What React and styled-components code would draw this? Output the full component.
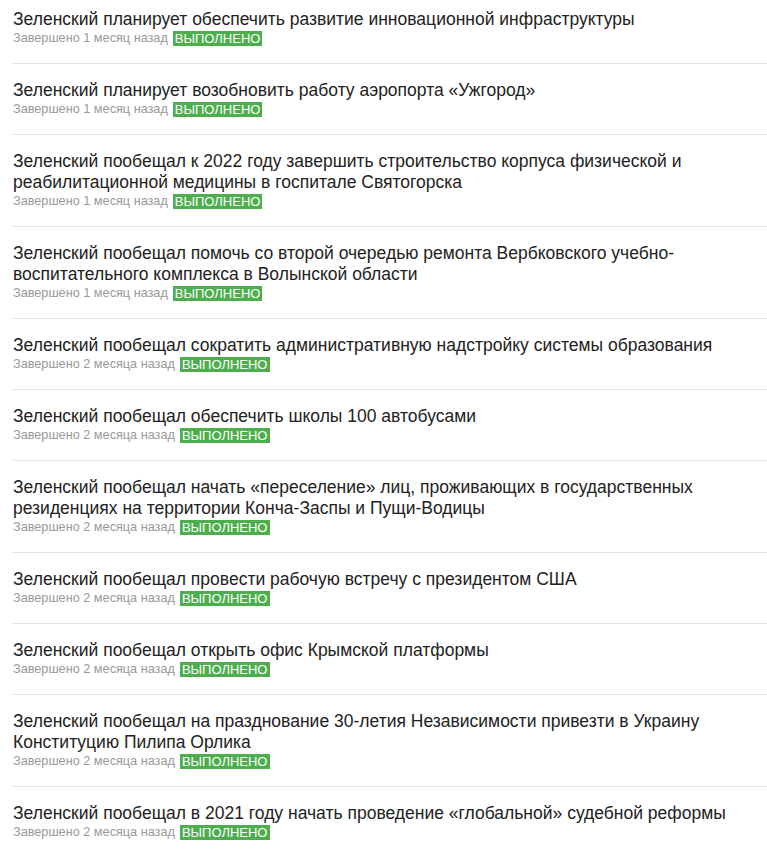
import styled, { createGlobalStyle } from "styled-components";

const GlobalStyle = createGlobalStyle`
  html, body {
    margin: 0;
    padding: 0;
    background: #fff;
  }
  body {
    font-family: "Liberation Sans", Arial, sans-serif;
  }
`;

const List = styled.ul`
  list-style: none;
  margin: 0;
  padding: 0 0 0 13px;
`;

const Item = styled.li`
  padding: 16px 0 16px;
  border-bottom: 1px solid #e3e3e3;
  &:first-child {
    padding-top: 9px;
  }
`;

const Title = styled.a`
  display: block;
  font-size: 17.5px;
  line-height: 21px;
  color: #222;
  text-decoration: none;
  padding-right: 30px;
`;

const Meta = styled.div`
  display: flex;
  align-items: center;
  gap: 5px;
  font-size: 12.7px;
  line-height: 17px;
  color: #999;
`;

const Badge = styled.span`
  background: #4cae4c;
  color: #fff;
  font-size: 13px;
  line-height: 15px;
  padding: 0 2px;
`;

const promises = [
  ["Зеленский планирует обеспечить развитие инновационной инфраструктуры", "1 месяц"],
  ["Зеленский планирует возобновить работу аэропорта «Ужгород»", "1 месяц"],
  ["Зеленский пообещал к 2022 году завершить строительство корпуса физической и реабилитационной медицины в госпитале Святогорска", "1 месяц"],
  ["Зеленский пообещал помочь со второй очередью ремонта Вербковского учебно-воспитательного комплекса в Волынской области", "1 месяц"],
  ["Зеленский пообещал сократить административную надстройку системы образования", "2 месяца"],
  ["Зеленский пообещал обеспечить школы 100 автобусами", "2 месяца"],
  ["Зеленский пообещал начать «переселение» лиц, проживающих в государственных резиденциях на территории Конча-Заспы и Пущи-Водицы", "2 месяца"],
  ["Зеленский пообещал провести рабочую встречу с президентом США", "2 месяца"],
  ["Зеленский пообещал открыть офис Крымской платформы", "2 месяца"],
  ["Зеленский пообещал на празднование 30-летия Независимости привезти в Украину Конституцию Пилипа Орлика", "2 месяца"],
  ["Зеленский пообещал в 2021 году начать проведение «глобальной» судебной реформы", "2 месяца"],
];

const App = () => {
  return (
    <>
      <GlobalStyle />
      <List>
        {promises.map(([title, ago]) => (
          <Item key={title}>
            <Title href="#">{title}</Title>
            <Meta>
              <span>Завершено {ago} назад</span>
              <Badge>ВЫПОЛНЕНО</Badge>
            </Meta>
          </Item>
        ))}
      </List>
    </>
  );
};

export default App;
